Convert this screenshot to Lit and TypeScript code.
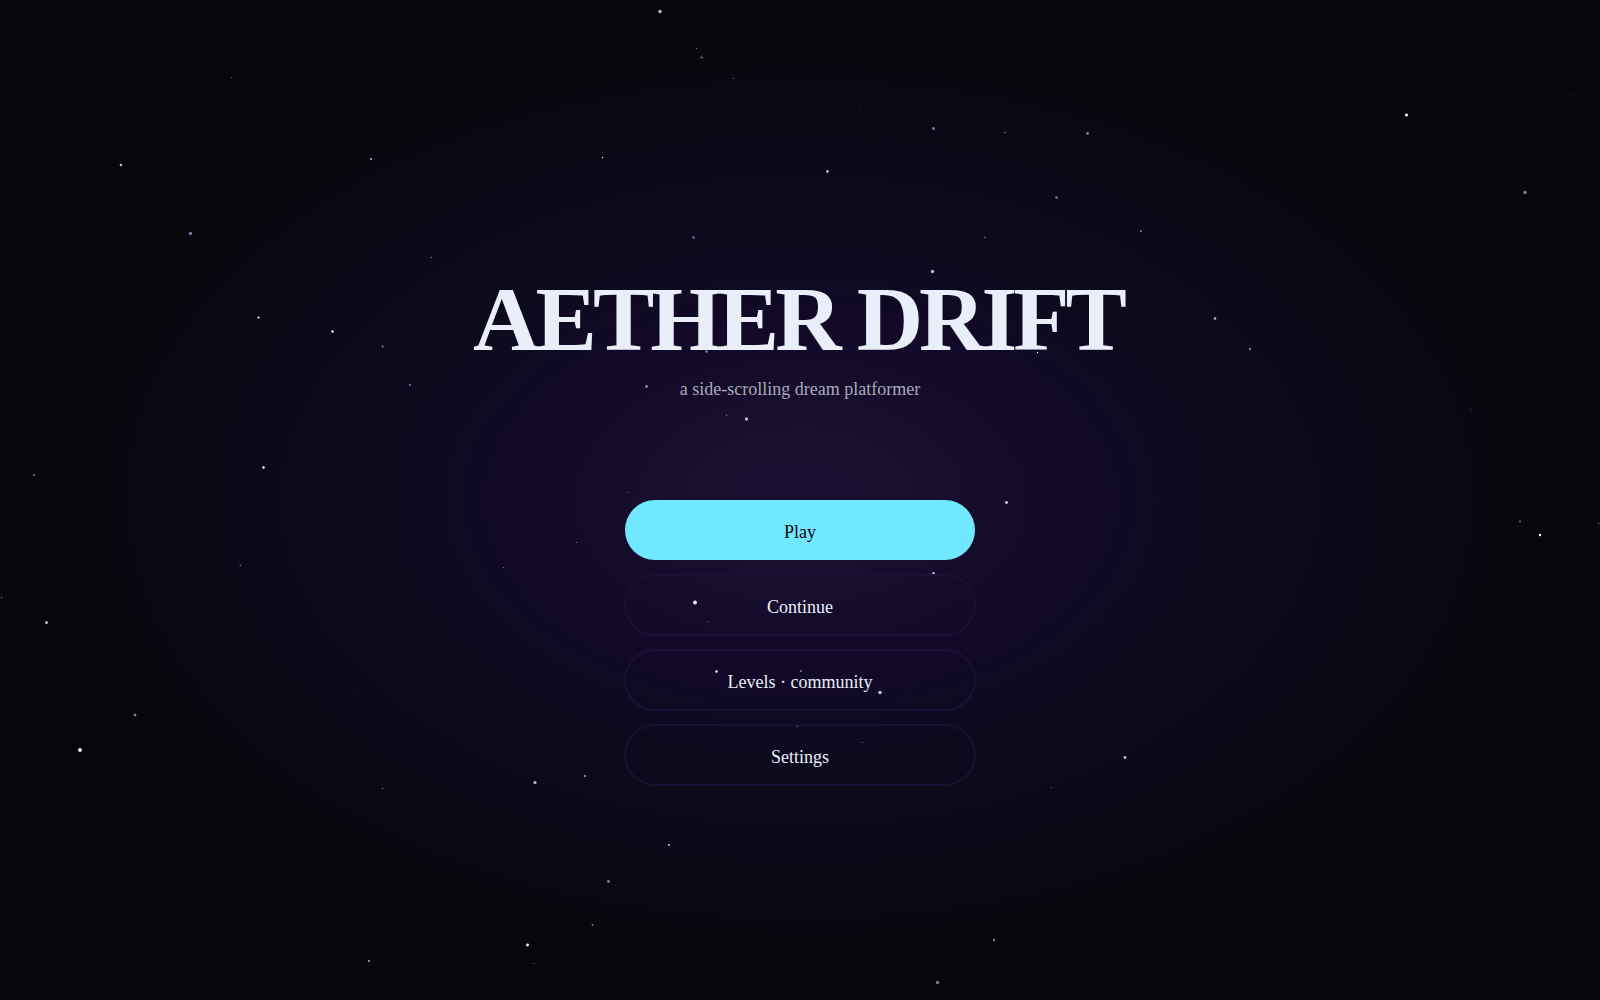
import { LitElement, html, svg, css } from "lit";
import { customElement } from "lit/decorators.js";

type Tone = "bright" | "light" | "soft" | "faint";

/* x, y, radius, tone on a 1600 x 1000 sky */
const STARS: [number, number, number, Tone][] = [
  [231.5, 77.5, 0.6, "soft"], [121, 165, 1.3, "light"], [205, 170, 1, "faint"],
  [371, 159, 1, "light"], [190.5, 233.5, 1.7, "soft"], [431, 257.5, 0.8, "soft"],
  [258.5, 317.5, 1.1, "bright"], [332.5, 331.5, 1.2, "bright"], [660, 11.5, 1.7, "light"],
  [696.5, 48.5, 0.6, "soft"], [701.5, 57.5, 1.1, "soft"], [733.5, 78.5, 0.6, "soft"],
  [860, 109, 1, "faint"], [933.5, 128.5, 1.5, "soft"], [1005, 132.5, 0.8, "soft"],
  [602.5, 157.5, 0.7, "bright"], [827.5, 171.5, 1.4, "light"], [1056.5, 197.5, 1.3, "soft"],
  [693.5, 237.5, 1.2, "soft"], [985, 237.5, 0.8, "soft"], [932.5, 271.5, 1.7, "light"],
  [1087.5, 133.5, 1.4, "soft"], [1406.5, 115, 1.5, "bright"], [1571, 95, 1, "faint"],
  [1525, 192.5, 1.7, "soft"], [1141, 231, 1.1, "soft"], [1150, 274, 1, "faint"],
  [1215, 318.5, 1.3, "light"], [1338.5, 315, 0.7, "faint"], [382.5, 346.5, 1.1, "soft"],
  [410, 385, 1.1, "soft"], [263.5, 467.5, 1.2, "bright"], [34, 475, 1, "soft"],
  [240, 565, 1.8, "faint"], [240.5, 565.5, 0.6, "soft"], [503.5, 567.5, 0.6, "soft"],
  [1.5, 597.5, 0.7, "soft"], [46.5, 622.5, 1.5, "light"], [1250, 349, 1.2, "soft"],
  [1471.5, 410, 1.6, "faint"], [1520, 521.5, 0.9, "soft"], [1540, 535, 1.2, "bright"],
  [1598.5, 523.5, 0.7, "soft"], [1442.5, 585, 1, "faint"], [135, 715, 1.4, "soft"],
  [80, 750, 1.9, "bright"], [355, 695, 1, "faint"], [382.5, 788.5, 0.7, "soft"],
  [521, 745, 1, "faint"], [535, 782.5, 1.6, "light"], [369, 961, 1, "light"],
  [527.5, 945, 1.4, "bright"], [534, 963.5, 0.6, "soft"], [716.5, 671.5, 1.2, "bright"],
  [801, 671, 1, "soft"], [880, 692.5, 1.8, "light"], [905, 695, 0.9, "faint"],
  [797.5, 726, 0.9, "soft"], [862.5, 742.5, 0.6, "soft"], [585, 776, 1.2, "soft"],
  [1051.5, 787.5, 0.6, "soft"], [669, 845, 1.1, "light"], [608.5, 881.5, 1.4, "soft"],
  [592.5, 925, 0.9, "soft"], [994, 940, 1.2, "soft"], [937.5, 982.5, 1.7, "soft"],
  [1125, 757.5, 1.4, "light"], [1521.5, 685, 0.9, "faint"], [628.5, 492.5, 0.6, "soft"],
  [933.5, 573.5, 1.4, "light"], [695, 602.5, 1.9, "bright"], [707.5, 621.5, 0.6, "soft"],
  [706.5, 351.5, 1.3, "soft"], [1037.5, 352.5, 0.7, "bright"], [646.5, 386.5, 1.2, "light"],
  [726.5, 415, 0.8, "soft"], [746.5, 419, 1.7, "light"], [1006.5, 502.5, 1.3, "bright"],
  [576.5, 542.5, 0.6, "soft"],
];

@customElement("star-field")
export class StarField extends LitElement {
  static styles = css`
    :host {
      position: absolute;
      inset: 0;
      pointer-events: none;
    }
    .sky {
      display: block;
      width: 100%;
      height: 100%;
    }
    .bright { fill: #ffffff; }
    .light { fill: #b9b9cf; }
    .soft { fill: #7d79a3; }
    .faint { fill: #1a123c; }
  `;

  render() {
    return html`
      <svg class="sky" viewBox="0 0 1600 1000" preserveAspectRatio="xMidYMid slice" aria-hidden="true">
        ${STARS.map(([x, y, r, tone]) => svg`<circle class=${tone} cx=${x} cy=${y} r=${r}></circle>`)}
      </svg>
    `;
  }
}

@customElement("app-root")
export class AppRoot extends LitElement {
  static styles = css`
    :host {
      display: block;
    }
    .screen {
      position: relative;
      box-sizing: border-box;
      min-height: 100vh;
      padding: 58px 24px 0;
      display: flex;
      flex-direction: column;
      align-items: center;
      justify-content: center;
      gap: 99px;
      overflow: hidden;
      font-family: "Liberation Serif", "Times New Roman", serif;
      color: #e9eef8;
      background: #06070a radial-gradient(
        ellipse farthest-corner at center,
        #1a0f30 0%,
        #190f2f 10%,
        #120a28 22%,
        #110927 26%,
        #0e0a1e 36%,
        #0c091a 45%,
        #0a0813 58%,
        #06070a 67%
      );
    }
    .heading {
      position: relative;
      display: flex;
      flex-direction: column;
      align-items: center;
      gap: 12px;
      text-align: center;
    }
    /* The right padding balances the tracking after the last letter. */
    .title {
      margin: 0;
      padding-right: 4px;
      font-size: 92px;
      line-height: 92px;
      font-weight: 700;
      letter-spacing: -4px;
    }
    .tagline {
      margin: 0;
      font-size: 18px;
      line-height: 24px;
      color: #a9a9b8;
    }
    .menu {
      position: relative;
      width: 100%;
      max-width: 350px;
      display: flex;
      flex-direction: column;
      gap: 15px;
    }
    .item {
      box-sizing: border-box;
      height: 60px;
      margin: 0;
      padding: 3px 24px 0;
      border: 0;
      border-radius: 30px;
      background: transparent;
      box-shadow: 0 0 0 1px #1b1136, inset 0 0 0 1px #1b1136;
      color: inherit;
      font: inherit;
      font-size: 18px;
      line-height: 24px;
      cursor: pointer;
    }
    .primary {
      background: #70e8ff;
      box-shadow: none;
      color: #06070a;
    }
  `;

  render() {
    return html`
      <main class="screen">
        <star-field></star-field>
        <header class="heading">
          <h1 class="title">AETHER DRIFT</h1>
          <p class="tagline">a side-scrolling dream platformer</p>
        </header>
        <nav class="menu">
          <button class="item primary" type="button">Play</button>
          <button class="item" type="button">Continue</button>
          <button class="item" type="button">Levels · community</button>
          <button class="item" type="button">Settings</button>
        </nav>
      </main>
    `;
  }
}
